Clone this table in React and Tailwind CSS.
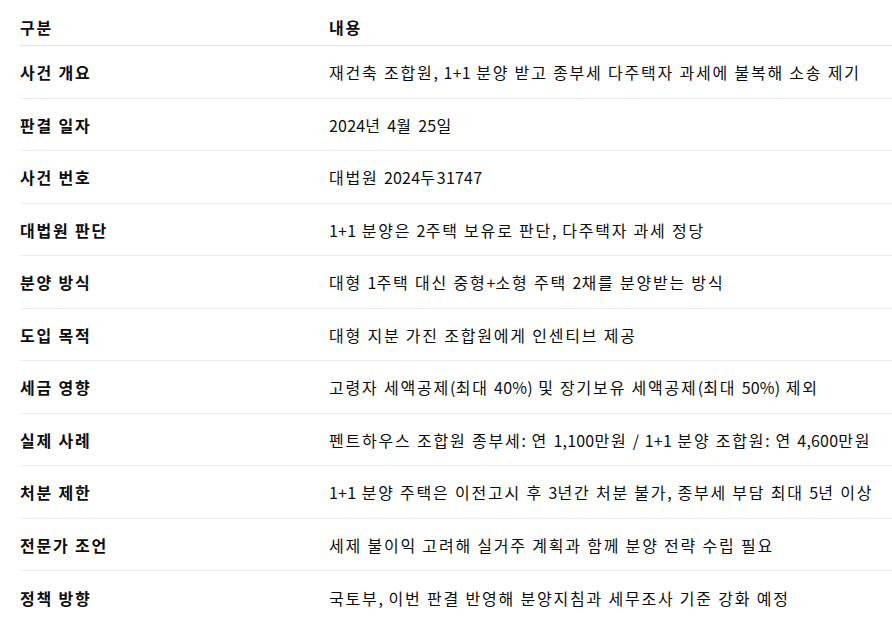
const rows = [
  ["사건 개요", "재건축 조합원, 1+1 분양 받고 종부세 다주택자 과세에 불복해 소송 제기"],
  ["판결 일자", "2024년 4월 25일"],
  ["사건 번호", "대법원 2024두31747"],
  ["대법원 판단", "1+1 분양은 2주택 보유로 판단, 다주택자 과세 정당"],
  ["분양 방식", "대형 1주택 대신 중형+소형 주택 2채를 분양받는 방식"],
  ["도입 목적", "대형 지분 가진 조합원에게 인센티브 제공"],
  ["세금 영향", "고령자 세액공제(최대 40%) 및 장기보유 세액공제(최대 50%) 제외"],
  ["실제 사례", "펜트하우스 조합원 종부세: 연 1,100만원 / 1+1 분양 조합원: 연 4,600만원"],
  ["처분 제한", "1+1 분양 주택은 이전고시 후 3년간 처분 불가, 종부세 부담 최대 5년 이상"],
  ["전문가 조언", "세제 불이익 고려해 실거주 계획과 함께 분양 전략 수립 필요"],
  ["정책 방향", "국토부, 이번 판결 반영해 분양지침과 세무조사 기준 강화 예정"],
];

// latin runs (digits, punctuation) keep normal spacing, hangul gets wider tracking
function Spaced({ text }) {
  return text.split(/([0-9A-Za-z+%(),.:/]+)/).map((part, i) =>
    i % 2 ? (
      <span key={i} className="tracking-[0.2px]">
        {part}
      </span>
    ) : (
      part
    )
  );
}

export default function App() {
  return (
    <div className="min-h-screen bg-white overflow-hidden pl-[20px] font-['Noto_Sans_CJK_KR','Noto_Sans',sans-serif] text-[16px] tracking-[1.8px] text-[#0d0d0d]">
      <div className="w-[900px]">
        <div className="grid grid-cols-[309px_1fr] h-[46px] pt-[15px] border-b border-[#e3e3e3] font-bold leading-6">
          <div>구분</div>
          <div>내용</div>
        </div>
        {rows.map(([label, text], i) => (
          <div
            key={label}
            className={
              "grid grid-cols-[309px_1fr] items-center h-[52.5px] leading-6 pt-[1px] " +
              (i < rows.length - 1 ? "border-b border-[#ececec]" : "")
            }
          >
            <div className="font-bold">{label}</div>
            <div className="whitespace-nowrap">
              <Spaced text={text} />
            </div>
          </div>
        ))}
      </div>
    </div>
  );
}
